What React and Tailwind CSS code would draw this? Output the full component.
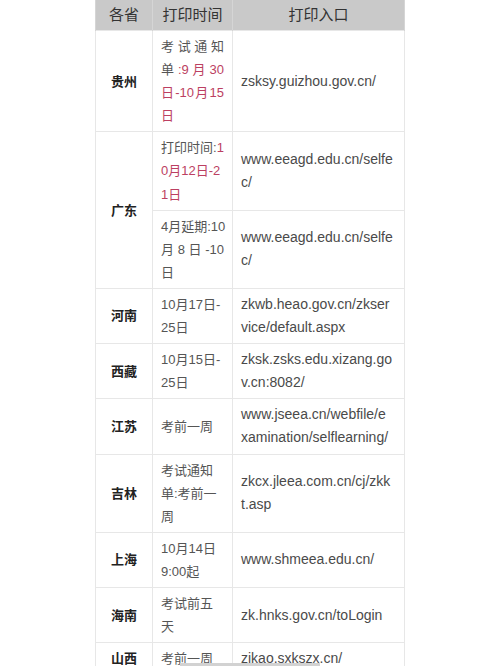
import React from "react";

const RED = "text-[#bc3f62]";

function J({ parts }) {
  return (
    <div className="flex justify-between whitespace-nowrap">
      {parts.map((p, i) => (
        <span key={i} className={p.red ? RED : ""}>
          {p.t}
        </span>
      ))}
    </div>
  );
}

function L({ children }) {
  return <div className="whitespace-nowrap">{children}</div>;
}

const rows = [
  {
    prov: "河南",
    time: [<L key="a">10月17日-</L>, <L key="b">25日</L>],
    url: ["zkwb.heao.gov.cn/zkser", "vice/default.aspx"],
  },
  {
    prov: "西藏",
    time: [<L key="a">10月15日-</L>, <L key="b">25日</L>],
    url: ["zksk.zsks.edu.xizang.go", "v.cn:8082/"],
  },
  {
    prov: "江苏",
    time: [<L key="a">考前一周</L>],
    url: ["www.jseea.cn/webfile/e", "xamination/selflearning/"],
  },
  {
    prov: "吉林",
    time: [<L key="a">考试通知</L>, <L key="b">单:考前一</L>, <L key="c">周</L>],
    url: ["zkcx.jleea.com.cn/cj/zkk", "t.asp"],
  },
  {
    prov: "上海",
    time: [<L key="a">10月14日</L>, <L key="b">9:00起</L>],
    url: ["www.shmeea.edu.cn/"],
  },
  {
    prov: "海南",
    time: [<L key="a">考试前五</L>, <L key="b">天</L>],
    url: ["zk.hnks.gov.cn/toLogin"],
  },
  {
    prov: "山西",
    time: [<L key="a">考前一周</L>],
    url: ["zikao.sxkszx.cn/"],
  },
];

const td = "border border-[#e7e7e7] align-middle";
const provCls = `${td} text-center font-bold text-[13px] text-[#222] leading-[23.1px] py-1`;
const timeCls = `${td} px-2 py-1 text-[13px] text-[#555] leading-[23.1px]`;
const urlCls = `${td} pl-2 pr-1 py-1 text-[14px] text-[#4a4a4a] leading-[23.1px] [font-family:'Liberation_Sans',Arial,sans-serif]`;

function Url({ lines }) {
  return (
    <>
      {lines.map((l, i) => (
        <div key={i} className="whitespace-nowrap">
          {l}
        </div>
      ))}
    </>
  );
}

export default function App() {
  return (
    <div className="w-[500px] h-[666px] overflow-hidden bg-white [font-family:'Liberation_Sans','Noto_Sans_CJK_SC',sans-serif]">
      <table className="mx-auto w-[309px] table-fixed border-collapse">
        <colgroup>
          <col className="w-[57px]" />
          <col className="w-[80px]" />
          <col className="w-[172px]" />
        </colgroup>
        <thead>
          <tr className="h-[30px] bg-[#c9c9c9] text-[15px] text-[#333]">
            <th className="border-x border-[#d5d5d5] font-normal text-center leading-[30px]">各省</th>
            <th className="border-x border-[#d5d5d5] font-normal text-center leading-[30px]">打印时间</th>
            <th className="border-x border-[#d5d5d5] font-normal text-center leading-[30px]">打印入口</th>
          </tr>
        </thead>
        <tbody>
          <tr>
            <td className={provCls}>贵州</td>
            <td className={timeCls}>
              <J parts={[{ t: "考" }, { t: "试" }, { t: "通" }, { t: "知" }]} />
              <J parts={[{ t: "单" }, { t: ":9", red: true }, { t: "月", red: true }, { t: "30", red: true }]} />
              <J parts={[{ t: "日", red: true }, { t: "-10", red: true }, { t: "月", red: true }, { t: "15", red: true }]} />
              <L>
                <span className={RED}>日</span>
              </L>
            </td>
            <td className={urlCls}>
              <Url lines={["zsksy.guizhou.gov.cn/"]} />
            </td>
          </tr>
          <tr>
            <td className={provCls} rowSpan={2}>
              广东
            </td>
            <td className={timeCls}>
              <L>
                打印时间:<span className={RED}>1</span>
              </L>
              <L>
                <span className={RED}>0月12日-2</span>
              </L>
              <L>
                <span className={RED}>1日</span>
              </L>
            </td>
            <td className={urlCls}>
              <Url lines={["www.eeagd.edu.cn/selfe", "c/"]} />
            </td>
          </tr>
          <tr>
            <td className={timeCls}>
              <L>4月延期:10</L>
              <J parts={[{ t: "月" }, { t: "8" }, { t: "日" }, { t: "-10" }]} />
              <L>日</L>
            </td>
            <td className={urlCls}>
              <Url lines={["www.eeagd.edu.cn/selfe", "c/"]} />
            </td>
          </tr>
          {rows.map((r) => (
            <tr key={r.prov}>
              <td className={provCls}>{r.prov}</td>
              <td className={timeCls}>{r.time}</td>
              <td className={urlCls}>
                <Url lines={r.url} />
              </td>
            </tr>
          ))}
        </tbody>
      </table>
      <div className="fixed left-[180px] top-[663px] h-[3px] w-[140px] bg-[#d2d2d2]" />
    </div>
  );
}
